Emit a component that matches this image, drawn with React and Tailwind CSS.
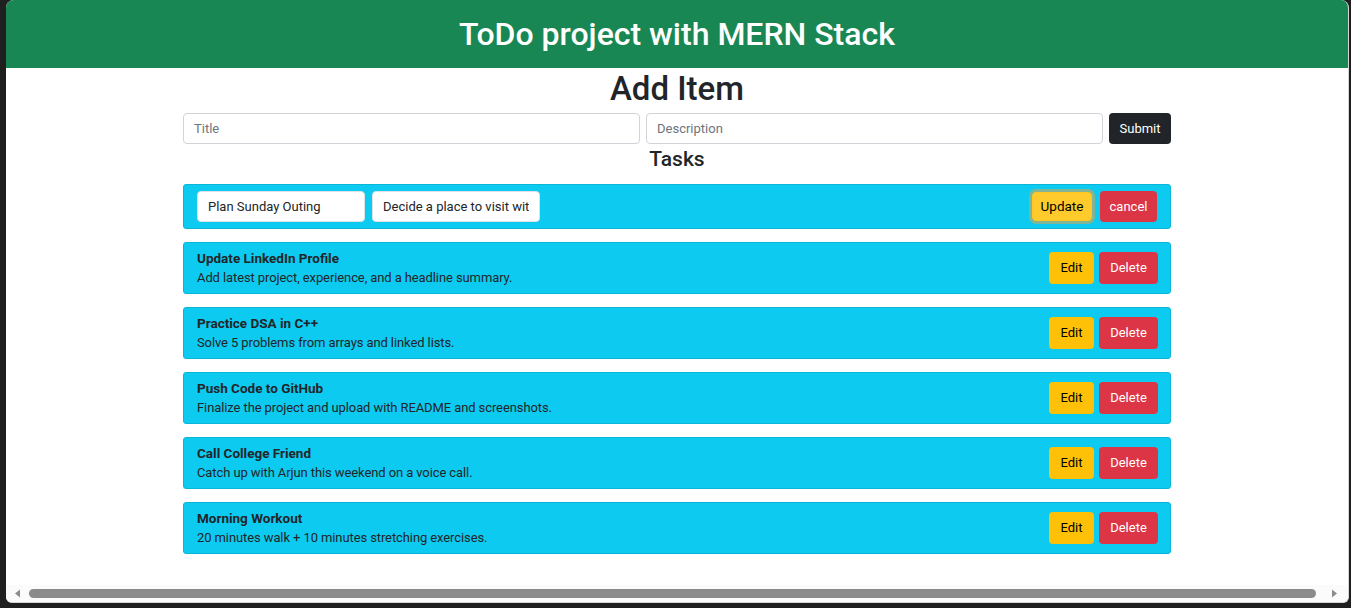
import React, { useState } from 'react';

const tasks = [
  { title: 'Update LinkedIn Profile', description: 'Add latest project, experience, and a headline summary.' },
  { title: 'Practice DSA in C++', description: 'Solve 5 problems from arrays and linked lists.' },
  { title: 'Push Code to GitHub', description: 'Finalize the project and upload with README and screenshots.' },
  { title: 'Call College Friend', description: 'Catch up with Arjun this weekend on a voice call.' },
  { title: 'Morning Workout', description: '20 minutes walk + 10 minutes stretching exercises.' },
];

function TaskRow({ task }) {
  return (
    <li className="flex items-center justify-between bg-[#0dcaf0] border border-[#0bb5d8] rounded-[3px] pl-[13px] pr-[12px] py-[5px]">
      <div className="flex flex-col leading-[20px] text-[#212529]">
        <span className="font-bold text-[13.5px]">{task.title}</span>
        <span className="text-[13px] tracking-[-0.1px]">{task.description}</span>
      </div>
      <div className="flex gap-[5px]">
        <button className="w-[45px] h-[32px] bg-[#ffc107] text-black text-[13px] rounded-[4px]">Edit</button>
        <button className="w-[59px] h-[32px] bg-[#dc3545] text-white text-[13px] rounded-[4px]">Delete</button>
      </div>
    </li>
  );
}

function App() {
  const [title, setTitle] = useState('');
  const [description, setDescription] = useState('');
  const [editTitle, setEditTitle] = useState('Plan Sunday Outing');
  const [editDescription, setEditDescription] = useState('Decide a place to visit with friends.');

  return (
    <div className="w-[1351px] h-[608px] bg-[#1f1f1f] pl-[6px] pr-[2px] pb-[5px] overflow-hidden" style={{ fontFamily: 'Roboto, sans-serif' }}>
      <div className="h-full bg-white rounded-t-[8px] rounded-b-[6px] border-r border-b border-[#d6d6d6] overflow-hidden flex flex-col">
        <div className="flex-1 overflow-hidden">
          <header className="h-[68px] bg-[#198754] flex items-center justify-center">
            <h1 className="text-white text-[32px] font-medium leading-none">ToDo project with MERN Stack</h1>
          </header>

          <div className="w-[988px] mx-auto">
            <h2 className="text-center text-[33px] leading-[38px] text-[#212529] font-medium mt-[2px] mb-[5px]">Add Item</h2>

            <div className="flex gap-[6px]">
              <input
                className="flex-1 h-[31px] border border-[#d0d4d9] rounded-[4px] px-[10px] text-[13px] placeholder:text-[#6c757d] outline-none"
                placeholder="Title"
                value={title}
                onChange={(e) => setTitle(e.target.value)}
              />
              <input
                className="flex-1 h-[31px] border border-[#d0d4d9] rounded-[4px] px-[10px] text-[13px] placeholder:text-[#6c757d] outline-none"
                placeholder="Description"
                value={description}
                onChange={(e) => setDescription(e.target.value)}
              />
              <button className="w-[62px] h-[31px] bg-[#212529] text-white text-[13px] rounded-[4px]">Submit</button>
            </div>

            <h3 className="text-center text-[21px] leading-[29px] text-[#212529] font-medium mt-[1px]">Tasks</h3>

            <ul className="mt-[10px] flex flex-col gap-[13px]">
              <li className="flex items-center justify-between bg-[#0dcaf0] border border-[#0bb5d8] rounded-[3px] pl-[13px] pr-[13px] py-[6px]">
                <div className="flex gap-[7px]">
                  <input
                    className="w-[168px] h-[31px] bg-white border border-[#dee2e6] rounded-[4px] px-[10px] text-[13px] text-[#212529] outline-none"
                    value={editTitle}
                    onChange={(e) => setEditTitle(e.target.value)}
                  />
                  <input
                    className="w-[168px] h-[31px] bg-white border border-[#dee2e6] rounded-[4px] px-[10px] text-[13px] text-[#212529] outline-none"
                    value={editDescription}
                    onChange={(e) => setEditDescription(e.target.value)}
                  />
                </div>
                <div className="flex items-center gap-[8px]">
                  <button className="w-[60px] h-[29px] bg-[#ffca2c] text-black text-[13.5px] rounded-[4px] border border-[#ffc720] ring-[3px] ring-[#80b596]">Update</button>
                  <button className="w-[57px] h-[31px] bg-[#dc3545] text-white text-[13px] rounded-[4px]">cancel</button>
                </div>
              </li>
              {tasks.map((task) => (
                <TaskRow key={task.title} task={task} />
              ))}
            </ul>
          </div>
        </div>

        <div className="h-[17px] flex items-center bg-[#fbfbfb]">
          <svg width="22" height="17" viewBox="0 0 22 17" className="shrink-0">
            <path d="M9 8.5 L14 4.5 L14 12.5 Z" fill="#8b8b8b" />
          </svg>
          <div className="flex-1 h-[9px] rounded-full bg-[#8b8b8b] ml-[1px] mr-[10px]" />
          <svg width="22" height="17" viewBox="0 0 22 17" className="shrink-0">
            <path d="M6 4.5 L11 8.5 L6 12.5 Z" fill="#8b8b8b" />
          </svg>
        </div>
      </div>
    </div>
  );
}

export default App;
